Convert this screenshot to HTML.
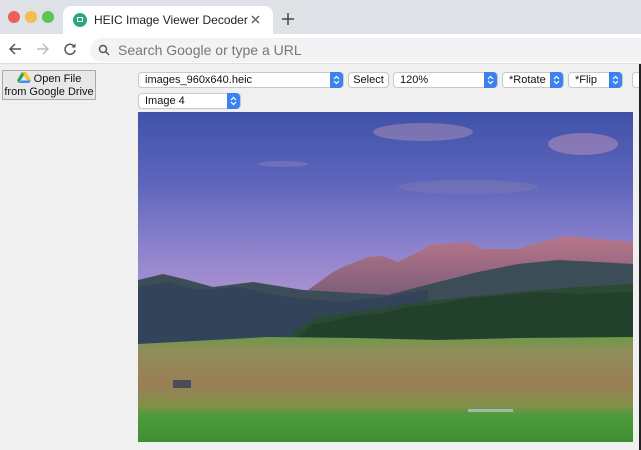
<!DOCTYPE html>
<html><head><style>
*{margin:0;padding:0;box-sizing:border-box}
body{width:641px;height:450px;overflow:hidden;background:#f0f0f0;font-family:"Liberation Sans",sans-serif;position:relative}
.abs{position:absolute}
.sel{position:absolute;height:16px;background:#fff;border:1px solid #c8c8c8;border-radius:4px;font-size:11px;line-height:14px;padding-left:6px;color:#111}
.sel .ar{position:absolute;right:0;top:-1px;width:13px;height:16px;background:#3b82f0;border-radius:0 4px 4px 0}
.sel .ar svg{position:absolute;left:3px;top:3px}
.btn{position:absolute;height:16px;background:#fff;border:1px solid #c8c8c8;border-radius:4px;font-size:11px;line-height:14px;text-align:center;color:#111}
</style></head><body>
<div class="abs" style="left:0;top:0;width:641px;height:34px;background:#dee1e6"></div>
<div class="abs" style="left:8px;top:11px;width:12px;height:12px;border-radius:50%;background:#ed5f57"></div>
<div class="abs" style="left:25px;top:11px;width:12px;height:12px;border-radius:50%;background:#f5bd4f"></div>
<div class="abs" style="left:42px;top:11px;width:12px;height:12px;border-radius:50%;background:#5fc454"></div>
<div class="abs" style="left:63px;top:6px;width:210px;height:30px;background:#fff;border-radius:8px 8px 0 0"></div>
<div class="abs" style="left:73px;top:13px;width:14px;height:14px;border-radius:50%;background:#2aa77e"></div>
<div class="abs" style="left:77px;top:17px;width:6px;height:5px;border:1px solid #fff;border-radius:1px"></div>
<div class="abs" style="left:94px;top:13px;font-size:12px;color:#222">HEIC Image Viewer Decoder</div>
<svg class="abs" style="left:251px;top:15px" width="9" height="9"><path d="M1 1L8 8M8 1L1 8" stroke="#555" stroke-width="1.3"/></svg>
<svg class="abs" style="left:282px;top:13px" width="12" height="12"><path d="M6 0V12M0 6H12" stroke="#444" stroke-width="1.5"/></svg>
<div class="abs" style="left:0;top:34px;width:641px;height:30px;background:#fff;border-bottom:1px solid #ddd"></div>
<svg class="abs" style="left:9px;top:43px" width="13" height="12"><path d="M12 6H1M6 1L1 6L6 11" stroke="#555" stroke-width="1.5" fill="none"/></svg>
<svg class="abs" style="left:36px;top:43px" width="13" height="12"><path d="M1 6H12M7 1L12 6L7 11" stroke="#bbb" stroke-width="1.5" fill="none"/></svg>
<svg class="abs" style="left:63px;top:42px" width="14" height="14"><path d="M11.5 5A5 5 0 1 0 12 8" stroke="#555" stroke-width="1.5" fill="none"/><path d="M12.5 1.5V5.5H8.5Z" fill="#555"/></svg>
<div class="abs" style="left:90px;top:38px;width:560px;height:24px;border-radius:12px;background:#f1f3f4"></div>
<svg class="abs" style="left:98px;top:44px" width="12" height="12"><circle cx="5" cy="5" r="3.5" stroke="#555" stroke-width="1.5" fill="none"/><path d="M7.5 7.5L11 11" stroke="#555" stroke-width="1.5"/></svg>
<div class="abs" style="left:118px;top:42px;font-size:14px;color:#777">Search Google or type a URL</div>
<div class="abs" style="left:2px;top:70px;width:94px;height:30px;background:#e8e8e8;border:1px solid #aaa;font-size:11px;line-height:13px;text-align:center;padding-top:1px;color:#111">
<svg width="14" height="11" style="vertical-align:-1px"><path d="M5 0h4l5 8.5H10z" fill="#f8c22e"/><path d="M5 0L0 8.5l2 2.5L7 3z" fill="#1fa463"/><path d="M2 11h10l2-2.5H4.5z" fill="#4688f4"/></svg> Open File<br>from Google Drive</div>
<div class="sel" style="left:138px;top:72px;width:206px">images_960x640.heic<div class="ar"><svg width="7" height="10"><path d="M1 4L3.5 1.5L6 4M1 6L3.5 8.5L6 6" stroke="#fff" stroke-width="1.2" fill="none"/></svg></div></div>
<div class="btn" style="left:348px;top:72px;width:41px">Select</div>
<div class="sel" style="left:393px;top:72px;width:105px">120%<div class="ar"><svg width="7" height="10"><path d="M1 4L3.5 1.5L6 4M1 6L3.5 8.5L6 6" stroke="#fff" stroke-width="1.2" fill="none"/></svg></div></div>
<div class="sel" style="left:502px;top:72px;width:62px">*Rotate<div class="ar"><svg width="7" height="10"><path d="M1 4L3.5 1.5L6 4M1 6L3.5 8.5L6 6" stroke="#fff" stroke-width="1.2" fill="none"/></svg></div></div>
<div class="sel" style="left:568px;top:72px;width:55px">*Flip<div class="ar"><svg width="7" height="10"><path d="M1 4L3.5 1.5L6 4M1 6L3.5 8.5L6 6" stroke="#fff" stroke-width="1.2" fill="none"/></svg></div></div>
<div class="sel" style="left:632px;top:72px;width:20px"></div>
<div class="sel" style="left:138px;top:93px;width:103px">Image 4<div class="ar"><svg width="7" height="10"><path d="M1 4L3.5 1.5L6 4M1 6L3.5 8.5L6 6" stroke="#fff" stroke-width="1.2" fill="none"/></svg></div></div>
<svg class="abs" style="left:138px;top:112px" width="495" height="330" viewBox="0 0 495 330">
<defs>
<linearGradient id="sky" x1="0" y1="0" x2="0" y2="1"><stop offset="0" stop-color="#3f52a8"/><stop offset=".4" stop-color="#5e66bc"/><stop offset=".75" stop-color="#8c82cc"/><stop offset="1" stop-color="#a890d0"/></linearGradient>
<linearGradient id="rock" x1="0" y1="0" x2="0" y2="1"><stop offset="0" stop-color="#b8768a"/><stop offset="1" stop-color="#6e5676"/></linearGradient>
<linearGradient id="field" x1="0" y1="0" x2="0" y2="1"><stop offset="0" stop-color="#6a9a48"/><stop offset=".12" stop-color="#8e8e58"/><stop offset=".45" stop-color="#9a7e56"/><stop offset=".65" stop-color="#84904a"/><stop offset=".75" stop-color="#4e9a3c"/><stop offset="1" stop-color="#3e9032"/></linearGradient>
</defs>
<rect width="495" height="180" fill="url(#sky)"/>
<ellipse cx="285" cy="20" rx="50" ry="9" fill="#a88ab8" opacity=".55"/>
<ellipse cx="445" cy="32" rx="35" ry="11" fill="#b890b8" opacity=".55"/>
<ellipse cx="330" cy="75" rx="70" ry="7" fill="#7a74b4" opacity=".6"/>
<ellipse cx="145" cy="52" rx="25" ry="3" fill="#8a80bc" opacity=".5"/>
<path d="M170 178L195 160 205 155 230 145 245 144 260 150 280 140 292 133 330 130 345 137 380 137 410 128 430 124 460 127 495 130V200H170Z" fill="url(#rock)"/>
<path d="M0 168L25 162 50 168 75 175 115 170 165 178 200 180 250 183 300 170 340 160 380 152 420 148 460 150 495 152V235H0Z" fill="#3d4d58"/>
<path d="M0 175L30 170 60 178 100 175 150 185 200 190 240 186 290 178V235H0Z" fill="#33435a"/>
<path d="M155 220L180 205 230 198 280 190 330 185 380 180 440 175 495 172V232H155Z" fill="#2a4a34"/>
<path d="M160 225L175 212 190 210 215 204 240 202 270 195 300 192 330 186 370 183 400 180 440 182 495 180V230H160Z" fill="#23402c"/>
<path d="M0 232L130 225 220 226 300 228 380 226 495 225V330H0Z" fill="url(#field)"/>
<rect x="35" y="268" width="18" height="8" fill="#4a4a58"/>
<rect x="330" y="297" width="45" height="3" fill="#b0c0c8" opacity=".8"/>
</svg>
<div class="abs" style="left:639px;top:64px;width:2px;height:386px;background:#222"></div>
</body></html>
